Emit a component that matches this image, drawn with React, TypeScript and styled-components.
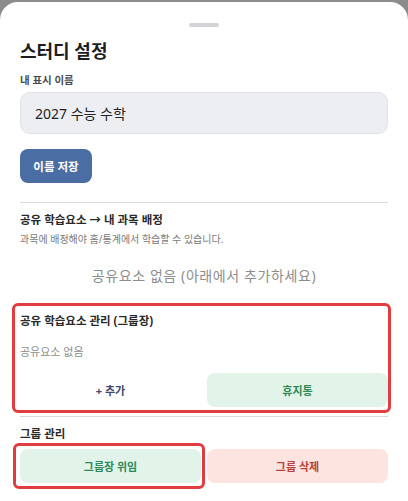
import React from 'react';
import styled, { createGlobalStyle } from 'styled-components';

const GlobalStyles = createGlobalStyle`
  html, body {
    margin: 0;
    padding: 0;
    background: #8c8c8c;
    font-family: "Noto Sans", "Noto Sans CJK KR", sans-serif;
  }
  * { box-sizing: border-box; }
`;

const Sheet = styled('div')`
  margin-top: 2px;
  min-height: calc(100vh - 2px);
  background: #ffffff;
  border-radius: 18px 18px 0 0;
  padding: 21px 20px 20px;
  display: flex;
  flex-direction: column;
`;

const Handle = styled('div')`
  align-self: center;
  width: 30px;
  height: 4px;
  border-radius: 2px;
  background: #d3d4d8;
  margin-bottom: 12px;
`;

const Title = styled('h2')`
  margin: 0;
  font-size: 18px;
  line-height: 24px;
  font-weight: 700;
  color: #1d1d1f;
`;

const Label = styled('div')`
  margin-top: 9px;
  font-size: 10.5px;
  line-height: 16px;
  font-weight: 700;
  color: #4a4a4a;
`;

const NameInput = styled('input')`
  margin-top: 4px;
  height: 42px;
  width: 100%;
  border: 1px solid #dfe1e6;
  border-radius: 10px;
  background: #eceef2;
  padding: 0 14px;
  font-family: inherit;
  font-size: 14px;
  color: #222;
  outline: none;
`;

const SaveButton = styled('button')`
  margin-top: 15px;
  align-self: flex-start;
  width: 72px;
  height: 34px;
  border: none;
  border-radius: 8px;
  background: #4a6ea3;
  color: #fff;
  font-family: inherit;
  font-size: 11.5px;
  font-weight: 700;
`;

const Divider = styled('hr')<{ $top: number }>`
  margin: ${(p) => p.$top}px 0 0;
  border: none;
  border-top: 1px solid #dcdcdf;
`;

const SectionTitle = styled('div')<{ $top?: number }>`
  margin-top: ${(p) => p.$top ?? 8}px;
  font-size: 11.5px;
  line-height: 18px;
  font-weight: 700;
  color: #2a2a2a;
`;

const Hint = styled('div')`
  margin-top: 2px;
  font-size: 10px;
  line-height: 16px;
  color: #7a7a7a;
`;

const EmptyText = styled('div')<{ $center?: boolean; $top: number }>`
  margin-top: ${(p) => p.$top}px;
  font-size: ${(p) => (p.$center ? 14 : 11)}px;
  letter-spacing: ${(p) => (p.$center ? 0.6 : 0)}px;
  line-height: 18px;
  color: #8d8d8d;
  text-align: ${(p) => (p.$center ? 'center' : 'left')};
`;

const Highlight = styled('div')<{ $inset: string }>`
  position: relative;
  &::after {
    content: '';
    position: absolute;
    inset: ${(p) => p.$inset};
    border: 3px solid #e13c3f;
    border-radius: 6px;
    pointer-events: none;
  }
`;

const ButtonRow = styled('div')<{ $top: number }>`
  margin-top: ${(p) => p.$top}px;
  display: grid;
  grid-template-columns: 1fr 1fr;
  gap: 6px;
`;

const tones = {
  plain: { bg: 'transparent', fg: '#3e4a6a' },
  green: { bg: '#e2f4ea', fg: '#2f8a5a' },
  red: { bg: '#fde4e1', fg: '#b9423a' },
};

const ActionButton = styled('button')<{ $tone: keyof typeof tones }>`
  width: 100%;
  height: 34px;
  border: none;
  border-radius: 8px;
  background: ${(p) => tones[p.$tone].bg};
  color: ${(p) => tones[p.$tone].fg};
  font-family: inherit;
  font-size: 11px;
  font-weight: 700;
`;

export default function App() {
  return (
    <>
      <GlobalStyles />
      <Sheet>
        <Handle />
        <Title>스터디 설정</Title>
        <Label>내 표시 이름</Label>
        <NameInput defaultValue="2027 수능 수학" />
        <SaveButton>이름 저장</SaveButton>

        <Divider $top={19} />
        <SectionTitle>공유 학습요소 → 내 과목 배정</SectionTitle>
        <Hint>과목에 배정해야 홈/통계에서 학습할 수 있습니다.</Hint>
        <EmptyText $center $top={20}>공유요소 없음 (아래에서 추가하세요)</EmptyText>

        <Highlight $inset="-9px -3px -6px -8px" style={{ marginTop: 27 }}>
          <SectionTitle $top={0}>공유 학습요소 관리 (그룹장)</SectionTitle>
          <EmptyText $top={13}>공유요소 없음</EmptyText>
          <ButtonRow $top={12}>
            <ActionButton $tone="plain">+ 추가</ActionButton>
            <ActionButton $tone="green">휴지통</ActionButton>
          </ButtonRow>
        </Highlight>

        <Divider $top={9} />
        <SectionTitle>그룹 관리</SectionTitle>
        <ButtonRow $top={6}>
          <Highlight $inset="-6px -4px -6px -7px">
            <ActionButton $tone="green">그룹장 위임</ActionButton>
          </Highlight>
          <ActionButton $tone="red">그룹 삭제</ActionButton>
        </ButtonRow>
      </Sheet>
    </>
  );
}
